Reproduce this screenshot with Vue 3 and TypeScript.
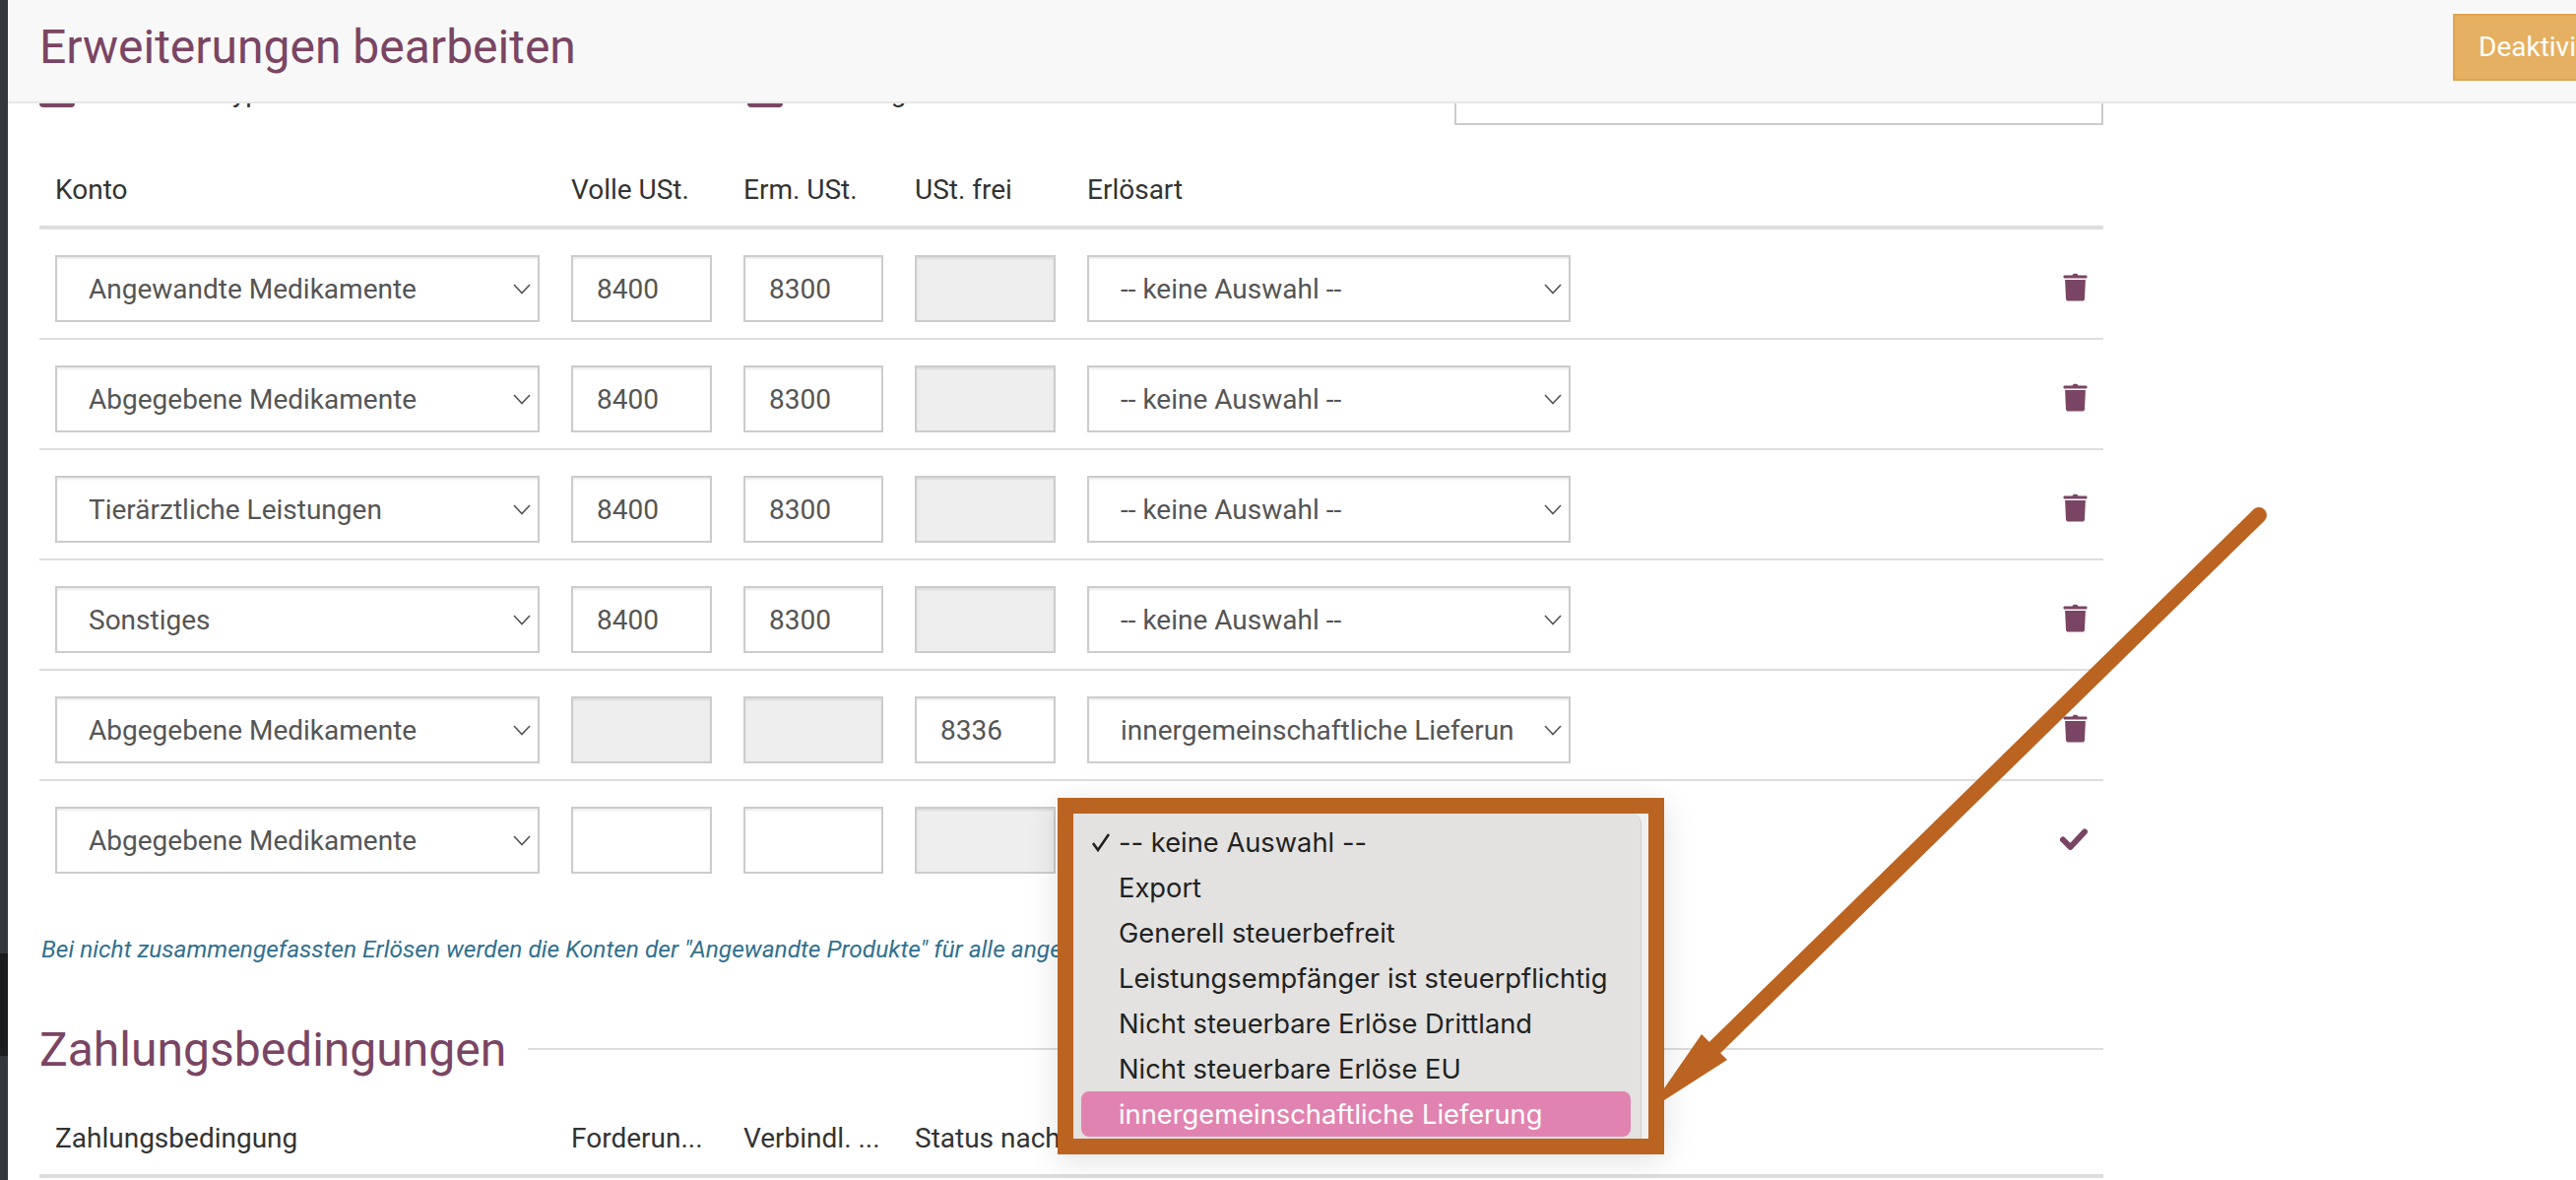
<template>
  <div class="page">
    <div class="side-strip"><div class="side-dark"></div></div>

    <div class="panel">
      <header class="topbar">
        <h1>Erweiterungen bearbeiten</h1>
        <button class="btn-deactivate" type="button">Deaktivieren</button>
      </header>

      <main class="content">
        <!-- Zeile ist zum größten Teil unter dem Kopf weggescrollt -->
        <div class="options-row">
          <label class="opt opt-a"><span class="box"></span>Nach Erlöstypen</label>
          <label class="opt opt-b"><span class="box"></span>Buchungen</label>
          <div class="options-input"></div>
        </div>

        <div class="grid-row head">
          <span>Konto</span>
          <span>Volle USt.</span>
          <span>Erm. USt.</span>
          <span>USt. frei</span>
          <span>Erlösart</span>
        </div>

        <div v-for="(row, idx) in rows" :key="idx" class="grid-row body-row" :class="{ last: idx === rows.length - 1 }">
          <div class="field select">
            {{ row.konto }}
            <svg class="chev" viewBox="0 0 18 11"><path d="M1 1l8 8.500 8-8.500" /></svg>
          </div>
          <div class="field" :class="{ off: row.voll === null }">{{ row.voll }}</div>
          <div class="field" :class="{ off: row.erm === null }">{{ row.erm }}</div>
          <div class="field" :class="{ off: row.frei === null }">{{ row.frei }}</div>
          <div v-if="row.art" class="field select">
            {{ row.art }}
            <svg class="chev" viewBox="0 0 18 11"><path d="M1 1l8 8.500 8-8.500" /></svg>
          </div>
          <div v-else></div>
          <div class="action">
            <svg v-if="row.art" class="trash" viewBox="0 0 25 29">
              <path d="M9.500 2.600C9.900 1.300 10.800.8 12.500.8s2.600.5 3 1.800h7.600c1 0 1.500.6 1.500 1.500s-.5 1.500-1.500 1.500H1.900C.9 5.600.4 5 .4 4.100s.5-1.500 1.500-1.500z" />
              <path d="M2.100 7h20.800l-.9 19.200c-.1 1.500-1 2.400-2.500 2.400H5.500c-1.500 0-2.400-.9-2.500-2.400z" />
            </svg>
            <svg v-else class="check" viewBox="0 0 28 22">
              <path d="M3 11.500l7.500 7.500L25 3.500" />
            </svg>
          </div>
        </div>

        <p class="note">Bei nicht zusammengefassten Erlösen werden die Konten der "Angewandte Produkte" für alle angewandten Erlöse verwendet.</p>

        <div class="section-title">
          <h2>Zahlungsbedingungen</h2>
          <span class="rule"></span>
        </div>

        <div class="grid-row head second">
          <span>Zahlungsbedingung</span>
          <span>Forderun...</span>
          <span>Verbindl. ...</span>
          <span>Status nach</span>
        </div>
      </main>
    </div>

    <!-- geöffnetes natives Auswahlmenü mit Markierungsrahmen -->
    <div class="menu-frame">
      <div class="menu-strip">
        <ul class="menu">
          <li v-for="(item, idx) in menuItems" :key="item" :class="{ active: idx === menuItems.length - 1 }">
            <span class="tick">
              <svg v-if="idx === 0" viewBox="0 0 20 20"><path d="M2 11l5 7L18 2" /></svg>
            </span>
            {{ item }}
          </li>
        </ul>
      </div>
    </div>

    <svg class="arrow" viewBox="0 0 2616 1198">
      <path class="arrow-line" d="M2294 523L1741 1064" />
      <path class="arrow-head" d="M1728 1050L1754 1076L1690 1117V1105Z" />
    </svg>
  </div>
</template>

<script setup lang="ts">
interface Row {
  konto: string;
  voll: string | null;
  erm: string | null;
  frei: string | null;
  art: string | null;
}

const none = '-- keine Auswahl --';

const rows: Row[] = [
  { konto: 'Angewandte Medikamente', voll: '8400', erm: '8300', frei: null, art: none },
  { konto: 'Abgegebene Medikamente', voll: '8400', erm: '8300', frei: null, art: none },
  { konto: 'Tierärztliche Leistungen', voll: '8400', erm: '8300', frei: null, art: none },
  { konto: 'Sonstiges', voll: '8400', erm: '8300', frei: null, art: none },
  { konto: 'Abgegebene Medikamente', voll: null, erm: null, frei: '8336', art: 'innergemeinschaftliche Lieferun' },
  { konto: 'Abgegebene Medikamente', voll: '', erm: '', frei: null, art: null },
];

const menuItems = [
  none,
  'Export',
  'Generell steuerbefreit',
  'Leistungsempfänger ist steuerpflichtig',
  'Nicht steuerbare Erlöse Drittland',
  'Nicht steuerbare Erlöse EU',
  'innergemeinschaftliche Lieferung',
];
</script>

<style>
html,
body {
  margin: 0;
  background: #fff;
  overflow: hidden;
}
</style>

<style scoped>
.page {
  position: relative;
  display: flex;
  width: 2616px;
  height: 1198px;
  overflow: hidden;
  font-family: Roboto, "Liberation Sans", sans-serif;
  background: #fff;
}

.side-strip {
  width: 8px;
  flex: none;
  padding-top: 968px;
  box-sizing: border-box;
  background: #32383c;
}

.side-dark {
  height: 104px;
  background: #1b1d1f;
}

.panel {
  position: relative;
  flex: 1;
  overflow: hidden;
}

/* ---------- Kopf ---------- */
.topbar {
  position: relative;
  z-index: 2;
  display: flex;
  align-items: center;
  justify-content: space-between;
  box-sizing: border-box;
  height: 105px;
  padding: 0 0 8px 32px;
  background: #f8f8f8;
  border-bottom: 2px solid #e7e7e7;
  overflow: hidden;
}

.topbar h1 {
  margin: 0;
  font-size: 48px;
  font-weight: 400;
  color: #7a4564;
  white-space: nowrap;
}

.btn-deactivate {
  flex: none;
  width: 250px;
  height: 68px;
  margin-right: -125px;
  padding: 0 0 0 24px;
  text-align: left;
  font: 400 28px Roboto, sans-serif;
  color: #fff;
  background: #e5b061;
  border: 2px solid #e0a54f;
}

/* ---------- Tabelle ---------- */
.content {
  width: 2096px;
  margin-left: 32px;
}

.options-row {
  position: relative;
  display: flex;
  height: 124px;
  margin-top: -102px;
}

.opt {
  box-sizing: border-box;
  display: flex;
  align-items: flex-end;
  gap: 16px;
  padding-bottom: 18px;
  font-size: 28px;
  color: #333;
  line-height: 30px;
}

.opt-a {
  width: 719px;
}

.opt-b {
  width: 718px;
}

.box {
  width: 36px;
  height: 36px;
  border-radius: 4px;
  background: #7a4564;
}

.options-input {
  flex: none;
  box-sizing: border-box;
  width: 659px;
  height: 124px;
  border: 2px solid #ccc;
}

.grid-row {
  display: grid;
  grid-template-columns: 492px 143px 142px 143px 491px 1fr;
  column-gap: 32px;
  padding-left: 16px;
}

.head {
  align-items: end;
  height: 106px;
  box-sizing: border-box;
  padding-bottom: 20px;
  font-size: 28px;
  line-height: 32px;
  color: #333;
  border-bottom: 4px solid #ddd;
}

.head span {
  white-space: nowrap;
}

.body-row {
  padding-top: 26px;
  padding-bottom: 16px;
  border-bottom: 2px solid #ddd;
}

.body-row.last {
  border-bottom: 0;
}

.field {
  position: relative;
  box-sizing: border-box;
  height: 68px;
  padding: 0 24px;
  line-height: 65px;
  font-size: 28px;
  color: #555;
  background: #fff;
  border: 2px solid #ccc;
  box-shadow: inset 0 2px 2px rgba(0, 0, 0, 0.075);
  white-space: nowrap;
  overflow: hidden;
}

.field.select {
  padding-left: 32px;
}

.field.off {
  background: #eee;
}

.chev {
  position: absolute;
  top: 27px;
  right: 7px;
  width: 18px;
  height: 11px;
  fill: none;
  stroke: #555;
  stroke-width: 1.6;
}

.action {
  display: flex;
  justify-content: flex-end;
  padding: 18px 16px 0 0;
}

.trash {
  width: 25px;
  height: 29px;
  fill: #7a4564;
}

.check {
  width: 28px;
  height: 22px;
  margin-top: 4px;
  fill: none;
  stroke: #7a4564;
  stroke-width: 6;
  stroke-linecap: round;
  stroke-linejoin: round;
}

.note {
  margin: 46px 0 0 2px;
  font-size: 24.5px;
  line-height: 30px;
  font-style: italic;
  color: #31708f;
  white-space: nowrap;
}

.section-title {
  display: flex;
  align-items: center;
  gap: 22px;
  margin-top: 56px;
  height: 60px;
}

.section-title h2 {
  margin: 0;
  font-size: 48px;
  font-weight: 400;
  color: #7a4564;
  white-space: nowrap;
}

.rule {
  flex: 1;
  height: 2px;
  background: #ddd;
}

.head.second {
  height: 101px;
}

/* ---------- Menü-Overlay ---------- */
.menu-frame {
  position: absolute;
  left: 1074px;
  top: 810px;
  z-index: 3;
  box-sizing: border-box;
  width: 616px;
  height: 362px;
  border: 16px solid #bb6320;
  box-shadow: 0 6px 30px rgba(0, 0, 0, 0.12);
}

.menu-strip {
  height: 100%;
  background: #efefee;
}

.menu {
  box-sizing: border-box;
  width: 577px;
  height: 100%;
  margin: 0;
  padding: 6px 10px 0 8px;
  list-style: none;
  background: #e3e2e0;
  border-right: 1px solid #cfcecc;
  border-top-right-radius: 10px;
  font-family: Inter, Roboto, sans-serif;
  font-size: 27.3px;
  color: #222;
}

.menu li {
  display: flex;
  align-items: center;
  height: 46px;
  padding-left: 10px;
  border-radius: 8px;
  white-space: nowrap;
}

.menu li.active {
  color: #fff;
  background: #e183b1;
}

.tick {
  flex: none;
  display: flex;
  width: 28px;
}

.tick svg {
  width: 20px;
  height: 20px;
  fill: none;
  stroke: #222;
  stroke-width: 2.6;
}

/* ---------- Pfeil ---------- */
.arrow {
  position: absolute;
  inset: 0;
  z-index: 4;
  width: 2616px;
  height: 1198px;
  pointer-events: none;
}

.arrow-line {
  fill: none;
  stroke: #bb6320;
  stroke-width: 16;
  stroke-linecap: round;
}

.arrow-head {
  fill: #bb6320;
}
</style>
